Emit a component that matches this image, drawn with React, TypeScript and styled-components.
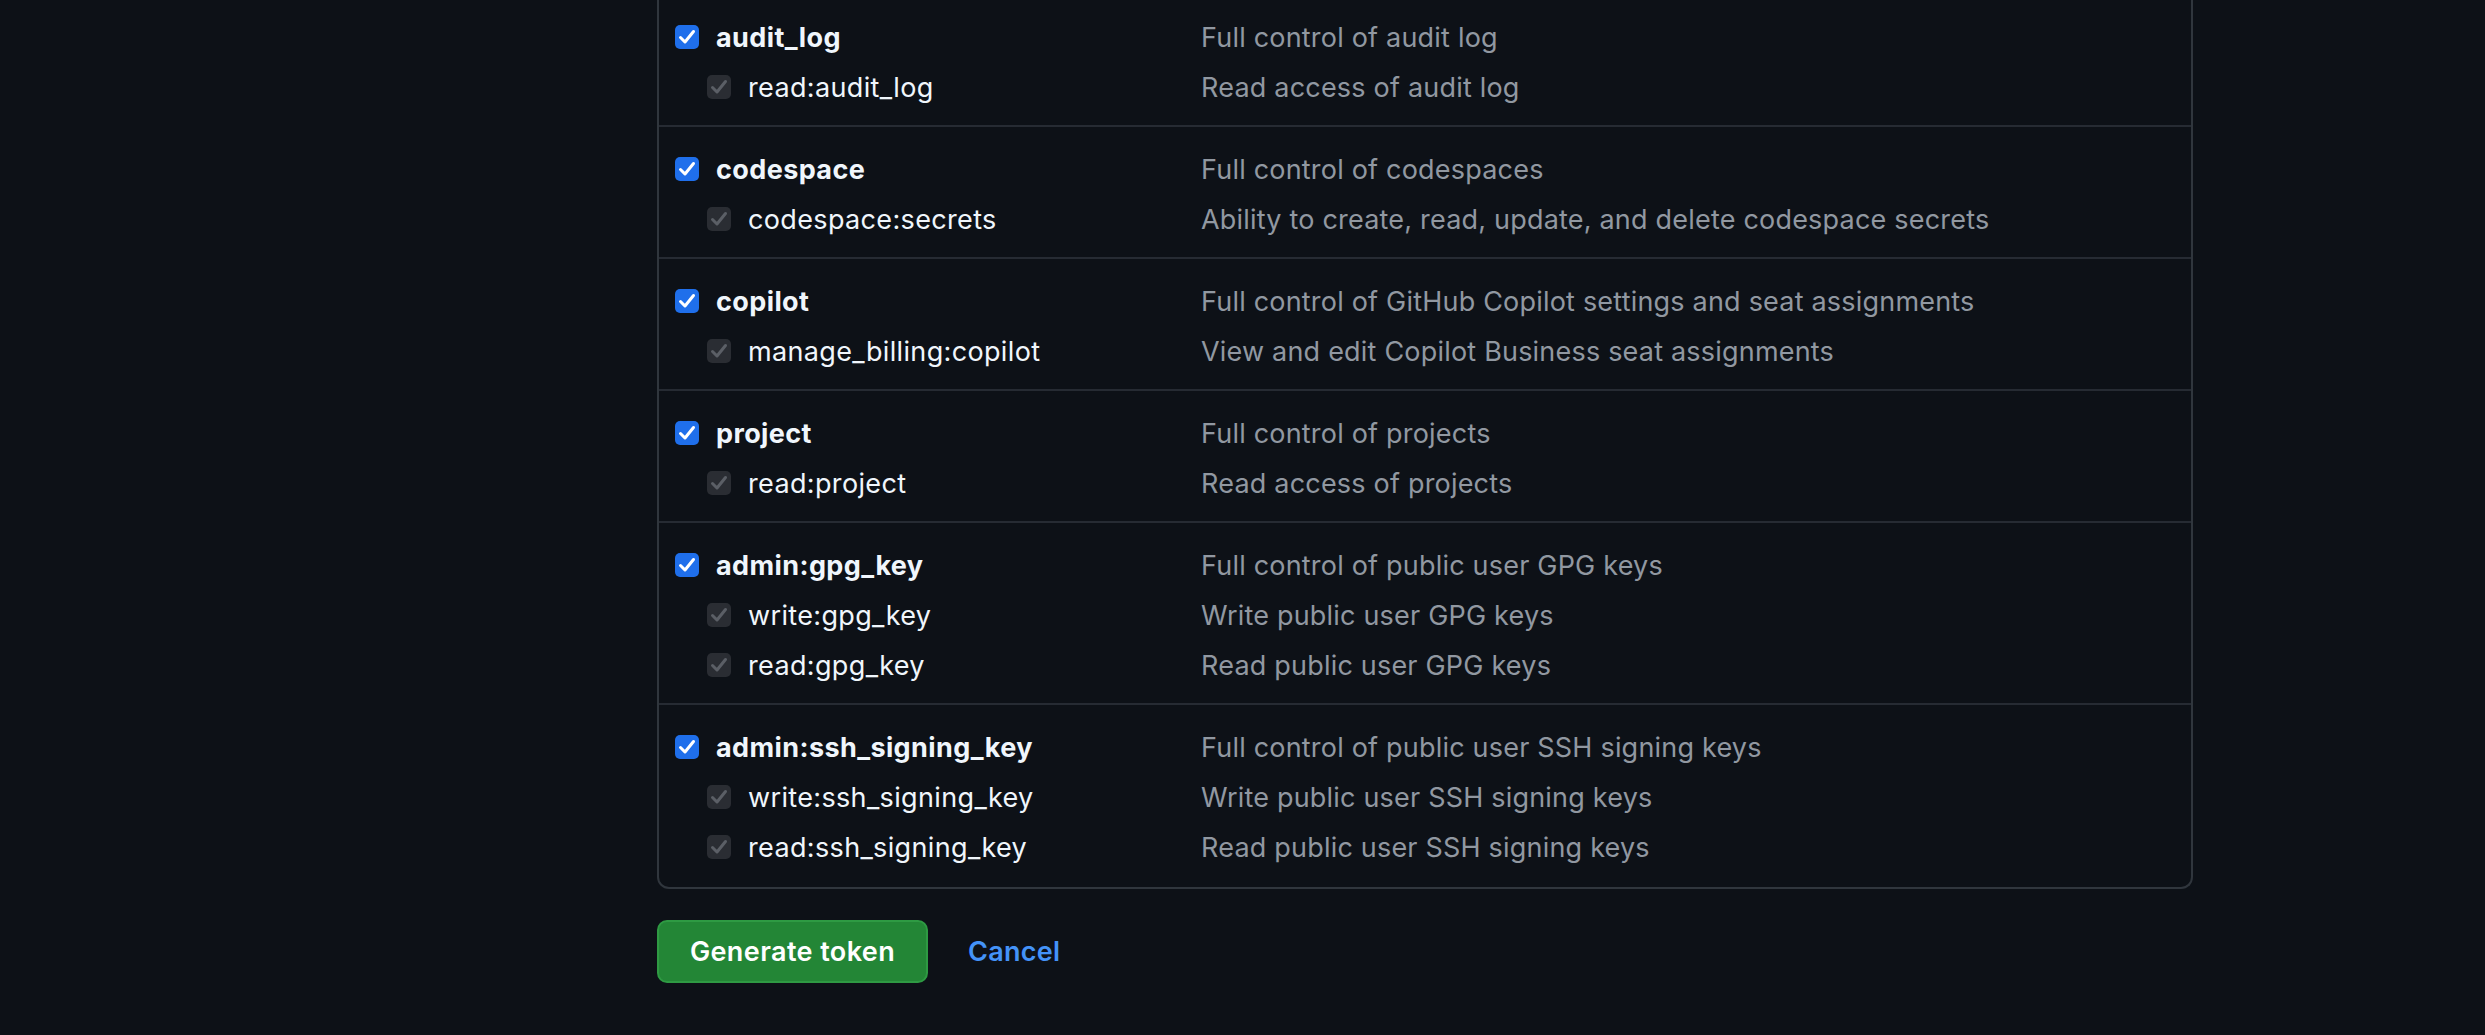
import React from 'react'
import styled, { createGlobalStyle } from 'styled-components'

const GlobalStyle = createGlobalStyle`
  html, body {
    margin: 0;
    background: #0d1117;
  }

  body {
    color: #f0f6fc;
    font-family: Inter, "Noto Sans", sans-serif;
    overflow: hidden;
  }
`

const Page = styled.div`
  box-sizing: border-box;
  height: 1035px;
  padding-left: 657px;
  width: 2485px;
`

const Panel = styled.div`
  border: 2px solid #30363d;
  border-radius: 0 0 12px 12px;
  border-top: 0;
  box-sizing: border-box;
  margin-top: -5px;
  width: 1536px;
`

const Group = styled.div`
  border-bottom: 2px solid #262b33;
  padding: 17px 0 13px 16px;

  &:last-child {
    border-bottom: 0;
    padding-bottom: 15px;
  }
`

const Row = styled.div`
  align-items: center;
  display: grid;
  grid-template-columns: 526px 1fr;
  height: 50px;
`

const Label = styled.label<{ $sub?: boolean }>`
  align-items: center;
  column-gap: 17px;
  display: flex;
  font-size: 27px;
  font-weight: ${(props) => (props.$sub ? 400 : 700)};
  letter-spacing: ${(props) => (props.$sub ? '0.35px' : '0.4px')};
  padding-left: ${(props) => (props.$sub ? '32px' : '0')};
  white-space: nowrap;
`

const Description = styled.span`
  color: #9198a1;
  font-size: 27px;
  letter-spacing: 0.2px;
  white-space: nowrap;
`

const Actions = styled.div`
  align-items: center;
  column-gap: 40px;
  display: flex;
  margin-top: 31px;
`

const PrimaryButton = styled.button`
  background-color: #238636;
  border: 2px solid #2e9a43;
  border-radius: 10px;
  box-sizing: border-box;
  color: #ffffff;
  font-family: inherit;
  font-size: 27px;
  font-weight: 600;
  height: 63px;
  letter-spacing: 0.4px;
  padding: 0;
  width: 271px;
`

const CancelLink = styled.a`
  color: #4493f8;
  font-size: 27px;
  font-weight: 600;
  letter-spacing: 0.3px;
  text-decoration: none;
`

const CheckBox: React.FC<{ disabled?: boolean }> = ({ disabled }) => (
  <svg width="24" height="24" viewBox="0 0 24 24" style={{ flex: 'none' }}>
    <rect x="0" y="0" width="24" height="24" rx="5" fill={disabled ? '#2a2d33' : '#1f6feb'} />
    <path
      d="M5.5 12.5 L10 17 L18.5 6.5"
      fill="none"
      stroke={disabled ? '#5b5f66' : '#ffffff'}
      strokeWidth="3"
      strokeLinecap="round"
      strokeLinejoin="round"
    />
  </svg>
)

interface Scope {
  name: string
  description: string
  children: { name: string; description: string }[]
}

const scopes: Scope[] = [
  {
    name: 'audit_log',
    description: 'Full control of audit log',
    children: [{ name: 'read:audit_log', description: 'Read access of audit log' }],
  },
  {
    name: 'codespace',
    description: 'Full control of codespaces',
    children: [
      { name: 'codespace:secrets', description: 'Ability to create, read, update, and delete codespace secrets' },
    ],
  },
  {
    name: 'copilot',
    description: 'Full control of GitHub Copilot settings and seat assignments',
    children: [{ name: 'manage_billing:copilot', description: 'View and edit Copilot Business seat assignments' }],
  },
  {
    name: 'project',
    description: 'Full control of projects',
    children: [{ name: 'read:project', description: 'Read access of projects' }],
  },
  {
    name: 'admin:gpg_key',
    description: 'Full control of public user GPG keys',
    children: [
      { name: 'write:gpg_key', description: 'Write public user GPG keys' },
      { name: 'read:gpg_key', description: 'Read public user GPG keys' },
    ],
  },
  {
    name: 'admin:ssh_signing_key',
    description: 'Full control of public user SSH signing keys',
    children: [
      { name: 'write:ssh_signing_key', description: 'Write public user SSH signing keys' },
      { name: 'read:ssh_signing_key', description: 'Read public user SSH signing keys' },
    ],
  },
]

export default function App() {
  return (
    <Page>
      <GlobalStyle />
      <Panel>
        {scopes.map((scope) => (
          <Group key={scope.name}>
            <Row>
              <Label>
                <CheckBox />
                {scope.name}
              </Label>
              <Description>{scope.description}</Description>
            </Row>
            {scope.children.map((child) => (
              <Row key={child.name}>
                <Label $sub>
                  <CheckBox disabled />
                  {child.name}
                </Label>
                <Description>{child.description}</Description>
              </Row>
            ))}
          </Group>
        ))}
      </Panel>
      <Actions>
        <PrimaryButton type="button">Generate token</PrimaryButton>
        <CancelLink href="#">Cancel</CancelLink>
      </Actions>
    </Page>
  )
}
